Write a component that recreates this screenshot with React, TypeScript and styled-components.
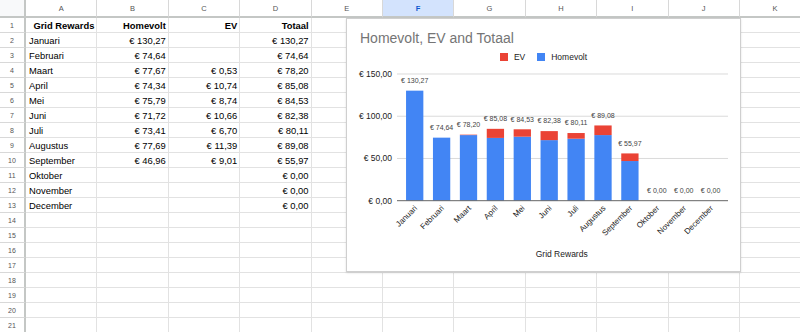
import React, { ReactElement } from 'react';
import styled, { createGlobalStyle } from 'styled-components';

const GlobalStyle = createGlobalStyle`
	html, body {
		margin: 0;
		padding: 0;
		background: #ffffff;
		font-family: 'Liberation Sans', Arial, sans-serif;
	}
`;

interface Row {
	month: string;
	homevolt: number | null;
	ev: number | null;
}

const rows: Row[] = [
	{ month: 'Januari', homevolt: 130.27, ev: null },
	{ month: 'Februari', homevolt: 74.64, ev: null },
	{ month: 'Maart', homevolt: 77.67, ev: 0.53 },
	{ month: 'April', homevolt: 74.34, ev: 10.74 },
	{ month: 'Mei', homevolt: 75.79, ev: 8.74 },
	{ month: 'Juni', homevolt: 71.72, ev: 10.66 },
	{ month: 'Juli', homevolt: 73.41, ev: 6.7 },
	{ month: 'Augustus', homevolt: 77.69, ev: 11.39 },
	{ month: 'September', homevolt: 46.96, ev: 9.01 },
	{ month: 'Oktober', homevolt: null, ev: null },
	{ month: 'November', homevolt: null, ev: null },
	{ month: 'December', homevolt: null, ev: null }
];

const euro = (v: number): string => `€ ${v.toFixed(2).replace('.', ',')}`;

const COLUMNS = ['A', 'B', 'C', 'D', 'E', 'F', 'G', 'H', 'I', 'J', 'K'];
const ROW_COUNT = 21;

const Page = styled.div`
	position: relative;
	width: 800px;
	height: 332px;
	overflow: hidden;
`;

const Sheet = styled.div`
	display: grid;
	grid-template-columns: 26px repeat(11, 71.4px);
	grid-template-rows: 18px repeat(${ROW_COUNT}, 15px);
`;

const Corner = styled.div`
	background: #f8f9fa;
	border-right: 2px solid #c4c7c5;
	border-bottom: 2px solid #c4c7c5;
	box-sizing: border-box;
`;

const ColHeader = styled.div<{ $active?: boolean }>`
	display: flex;
	align-items: center;
	justify-content: center;
	box-sizing: border-box;
	background: ${({ $active }): string => ($active ? '#d3e3fd' : '#ffffff')};
	border-right: 1px solid #d8d8d8;
	border-bottom: 2px solid #c4c7c5;
	font-size: 7.5px;
	color: ${({ $active }): string => ($active ? '#0b57d0' : '#555')};
	font-weight: ${({ $active }): number => ($active ? 700 : 400)};
`;

const RowHeader = styled.div`
	display: flex;
	align-items: center;
	justify-content: center;
	box-sizing: border-box;
	background: #ffffff;
	border-right: 2px solid #c4c7c5;
	border-bottom: 1px solid #d8d8d8;
	font-size: 7px;
	color: #555;
`;

const Cell = styled.div<{ $align?: 'left' | 'right'; $bold?: boolean }>`
	display: flex;
	align-items: center;
	justify-content: ${({ $align }): string => ($align === 'right' ? 'flex-end' : 'flex-start')};
	box-sizing: border-box;
	padding: 0 2px 0 3px;
	border-right: 1px solid #e2e2e2;
	border-bottom: 1px solid #e2e2e2;
	font-size: 9.4px;
	font-weight: ${({ $bold }): number => ($bold ? 700 : 400)};
	color: #000;
	white-space: nowrap;
	overflow: visible;
`;

const ChartCard = styled.div`
	position: absolute;
	left: 346px;
	top: 18px;
	width: 395px;
	height: 254px;
	box-sizing: border-box;
	background: #ffffff;
	border: 1px solid #cfcfcf;
	box-shadow: 0 1px 2px rgba(0, 0, 0, 0.12);
	display: flex;
	flex-direction: column;
`;

const ChartTitle = styled.div`
	padding: 10px 0 0 13px;
	height: 18px;
	line-height: 18px;
	font-size: 14px;
	color: #757575;
`;

const Legend = styled.div`
	margin-top: 4.5px;
	height: 10px;
	display: flex;
	justify-content: center;
	align-items: center;
	gap: 12px;
	font-size: 8.5px;
	color: #222;
`;

const LegendItem = styled.div`
	display: flex;
	align-items: center;
	gap: 6px;
`;

const Swatch = styled.span<{ $color: string }>`
	width: 8px;
	height: 8px;
	background: ${({ $color }): string => $color};
`;

const Plot = styled.svg`
	display: block;
	font-family: 'Liberation Sans', Arial, sans-serif;
`;

const RED = '#ea4335';
const BLUE = '#4285f4';
const ZERO = 138.7;
const SCALE = 0.8447;
const X0 = 67.7;
const PITCH = 26.9;
const BW = 17.3;

const ChartPlot = (): ReactElement => (
	<Plot width={393} height={209} viewBox="0 0 393 209">
		{[50, 100, 150].map((t) => (
			<line key={t} x1={50} x2={381} y1={ZERO - t * SCALE} y2={ZERO - t * SCALE} stroke="#dadada" strokeWidth={1} />
		))}
		{[0, 50, 100, 150].map((t) => (
			<text key={t} x={45} y={ZERO - t * SCALE + 3} fontSize={8.5} fill="#222" textAnchor="end">
				{euro(t)}
			</text>
		))}
		{rows.map((r, i) => {
			const cx = X0 + i * PITCH;
			const hv = r.homevolt ?? 0;
			const ev = r.ev ?? 0;
			const total = hv + ev;
			const hvH = hv * SCALE;
			const evH = ev * SCALE;
			return (
				<g key={r.month}>
					{hv > 0 && <rect x={cx - BW / 2} y={ZERO - hvH} width={BW} height={hvH} fill={BLUE} />}
					{ev > 0 && <rect x={cx - BW / 2} y={ZERO - hvH - evH} width={BW} height={evH} fill={RED} />}
					<text x={cx} y={ZERO - total * SCALE - 7.7} fontSize={7} fill="#444" textAnchor="middle">
						{euro(total)}
					</text>
					<text
						x={cx + 3}
						y={ZERO + 8}
						fontSize={8}
						fill="#222"
						textAnchor="end"
						transform={`rotate(-45 ${cx + 3} ${ZERO + 8})`}
					>
						{r.month}
					</text>
				</g>
			);
		})}
		<line x1={50} x2={381} y1={ZERO} y2={ZERO} stroke="#666" strokeWidth={1} />
		<text x={214.7} y={195} fontSize={8.5} fill="#222" textAnchor="middle">
			Grid Rewards
		</text>
	</Plot>
);

const cellValues = (rowIndex: number): { text: string; align: 'left' | 'right'; bold?: boolean }[] => {
	if (rowIndex === 1) {
		return [
			{ text: 'Grid Rewards', align: 'right', bold: true },
			{ text: 'Homevolt', align: 'right', bold: true },
			{ text: 'EV', align: 'right', bold: true },
			{ text: 'Totaal', align: 'right', bold: true }
		];
	}
	const r = rows[rowIndex - 2];
	if (!r) return [];
	const total = (r.homevolt ?? 0) + (r.ev ?? 0);
	return [
		{ text: r.month, align: 'left' },
		{ text: r.homevolt !== null ? euro(r.homevolt) : '', align: 'right' },
		{ text: r.ev !== null ? euro(r.ev) : '', align: 'right' },
		{ text: euro(total), align: 'right' }
	];
};

const App = (): ReactElement => (
	<Page>
		<GlobalStyle />
		<Sheet>
			<Corner />
			{COLUMNS.map((c) => (
				<ColHeader key={c} $active={c === 'F'}>
					{c}
				</ColHeader>
			))}
			{Array.from({ length: ROW_COUNT }, (_, i) => i + 1).map((rowIndex) => {
				const values = cellValues(rowIndex);
				return (
					<React.Fragment key={rowIndex}>
						<RowHeader>{rowIndex}</RowHeader>
						{COLUMNS.map((c, ci) => {
							const v = values[ci];
							return (
								<Cell key={c} $align={v?.align} $bold={v?.bold}>
									{v?.text}
								</Cell>
							);
						})}
					</React.Fragment>
				);
			})}
		</Sheet>
		<ChartCard>
			<ChartTitle>Homevolt, EV and Totaal</ChartTitle>
			<Legend>
				<LegendItem>
					<Swatch $color={RED} />
					EV
				</LegendItem>
				<LegendItem>
					<Swatch $color={BLUE} />
					Homevolt
				</LegendItem>
			</Legend>
			<ChartPlot />
		</ChartCard>
	</Page>
);

export default App;
